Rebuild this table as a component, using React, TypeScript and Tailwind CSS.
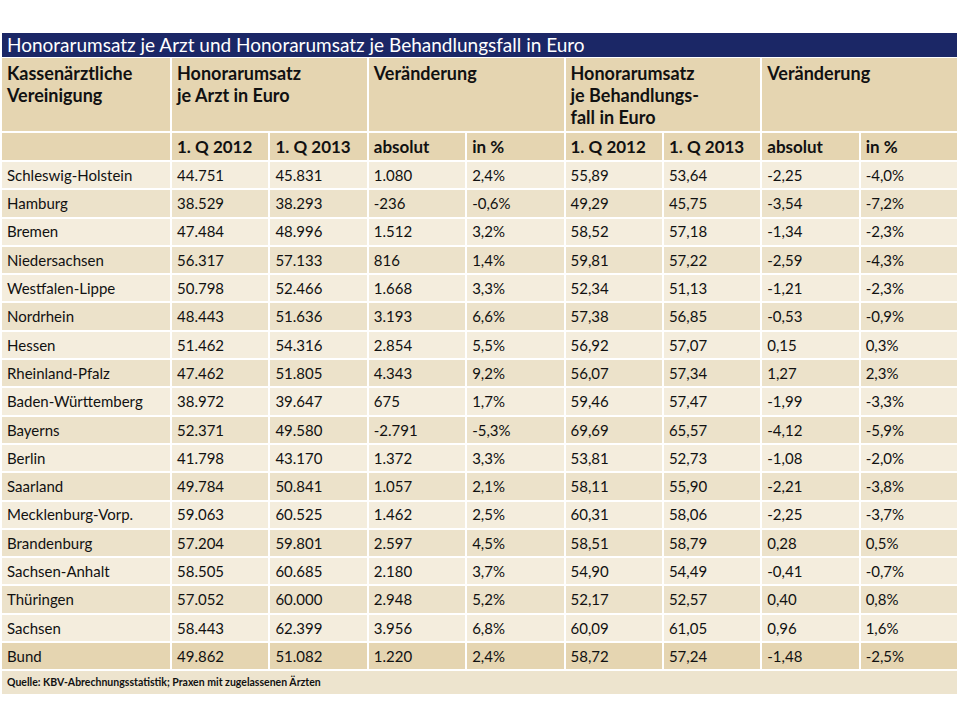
import React from "react"

type Row = [string, string, string, string, string, string, string, string, string]

const rows: Row[] = [
  ["Schleswig-Holstein", "44.751", "45.831", "1.080", "2,4%", "55,89", "53,64", "-2,25", "-4,0%"],
  ["Hamburg", "38.529", "38.293", "-236", "-0,6%", "49,29", "45,75", "-3,54", "-7,2%"],
  ["Bremen", "47.484", "48.996", "1.512", "3,2%", "58,52", "57,18", "-1,34", "-2,3%"],
  ["Niedersachsen", "56.317", "57.133", "816", "1,4%", "59,81", "57,22", "-2,59", "-4,3%"],
  ["Westfalen-Lippe", "50.798", "52.466", "1.668", "3,3%", "52,34", "51,13", "-1,21", "-2,3%"],
  ["Nordrhein", "48.443", "51.636", "3.193", "6,6%", "57,38", "56,85", "-0,53", "-0,9%"],
  ["Hessen", "51.462", "54.316", "2.854", "5,5%", "56,92", "57,07", "0,15", "0,3%"],
  ["Rheinland-Pfalz", "47.462", "51.805", "4.343", "9,2%", "56,07", "57,34", "1,27", "2,3%"],
  ["Baden-Württemberg", "38.972", "39.647", "675", "1,7%", "59,46", "57,47", "-1,99", "-3,3%"],
  ["Bayerns", "52.371", "49.580", "-2.791", "-5,3%", "69,69", "65,57", "-4,12", "-5,9%"],
  ["Berlin", "41.798", "43.170", "1.372", "3,3%", "53,81", "52,73", "-1,08", "-2,0%"],
  ["Saarland", "49.784", "50.841", "1.057", "2,1%", "58,11", "55,90", "-2,21", "-3,8%"],
  ["Mecklenburg-Vorp.", "59.063", "60.525", "1.462", "2,5%", "60,31", "58,06", "-2,25", "-3,7%"],
  ["Brandenburg", "57.204", "59.801", "2.597", "4,5%", "58,51", "58,79", "0,28", "0,5%"],
  ["Sachsen-Anhalt", "58.505", "60.685", "2.180", "3,7%", "54,90", "54,49", "-0,41", "-0,7%"],
  ["Thüringen", "57.052", "60.000", "2.948", "5,2%", "52,17", "52,57", "0,40", "0,8%"],
  ["Sachsen", "58.443", "62.399", "3.956", "6,8%", "60,09", "61,05", "0,96", "1,6%"],
]

const bund: Row = ["Bund", "49.862", "51.082", "1.220", "2,4%", "58,72", "57,24", "-1,48", "-2,5%"]

const subHeads = ["", "1. Q 2012", "1. Q 2013", "absolut", "in %", "1. Q 2012", "1. Q 2013", "absolut", "in %"]

export default function App() {
  return (
    <div className="w-[960px] h-[714px] bg-white pt-[33px] pl-[2px] text-[#111]" style={{ fontFamily: "Lato, 'Open Sans', sans-serif" }}>
      <div className="w-[955px]">
        {/* title bar */}
        <div className="h-[24px] bg-[#1b2766] text-white text-[19px] leading-[24px] pl-[5px] mb-[1px]">
          Honorarumsatz je Arzt und Honorarumsatz je Behandlungsfall in Euro
        </div>

        <div className="grid grid-cols-[168px_repeat(8,1fr)] grid-rows-[73px_27px_repeat(18,26.3px)_23px] gap-[2px] text-[15px]">
          {/* header row 1 */}
          <div className="bg-[#e5d5b1] font-bold text-[18px] leading-[22px] px-[5px] pt-[4px]">
            Kassenärztliche<br />Vereinigung
          </div>
          <div className="col-span-2 bg-[#e5d5b1] font-bold text-[18px] leading-[22px] px-[5px] pt-[4px]">
            Honorarumsatz<br />je Arzt in Euro
          </div>
          <div className="col-span-2 bg-[#e5d5b1] font-bold text-[18px] leading-[22px] px-[5px] pt-[4px]">
            Veränderung
          </div>
          <div className="col-span-2 bg-[#e5d5b1] font-bold text-[18px] leading-[22px] px-[5px] pt-[4px]">
            Honorarumsatz<br />je Behandlungs-<br />fall in Euro
          </div>
          <div className="col-span-2 bg-[#e5d5b1] font-bold text-[18px] leading-[22px] px-[5px] pt-[4px]">
            Veränderung
          </div>

          {/* header row 2 */}
          {subHeads.map((h, i) => (
            <div key={i} className="bg-[#e5d5b1] font-bold text-[17px] px-[5px] flex items-center">
              {h}
            </div>
          ))}

          {/* data */}
          {rows.map((r, ri) =>
            r.map((c, ci) => (
              <div
                key={ri + "-" + ci}
                className={(ri % 2 === 0 ? "bg-[#f4eddd]" : "bg-[#ece2ca]") + " px-[5px] flex items-center"}
              >
                {c}
              </div>
            ))
          )}

          {bund.map((c, ci) => (
            <div key={"b" + ci} className="bg-[#e5d5b1] px-[5px] flex items-center">
              {c}
            </div>
          ))}

          {/* footer */}
          <div className="col-span-9 bg-[#ede4ce] text-[10.5px] font-bold px-[5px] flex items-center">
            Quelle: KBV-Abrechnungsstatistik; Praxen mit zugelassenen Ärzten
          </div>
        </div>
      </div>
    </div>
  )
}
